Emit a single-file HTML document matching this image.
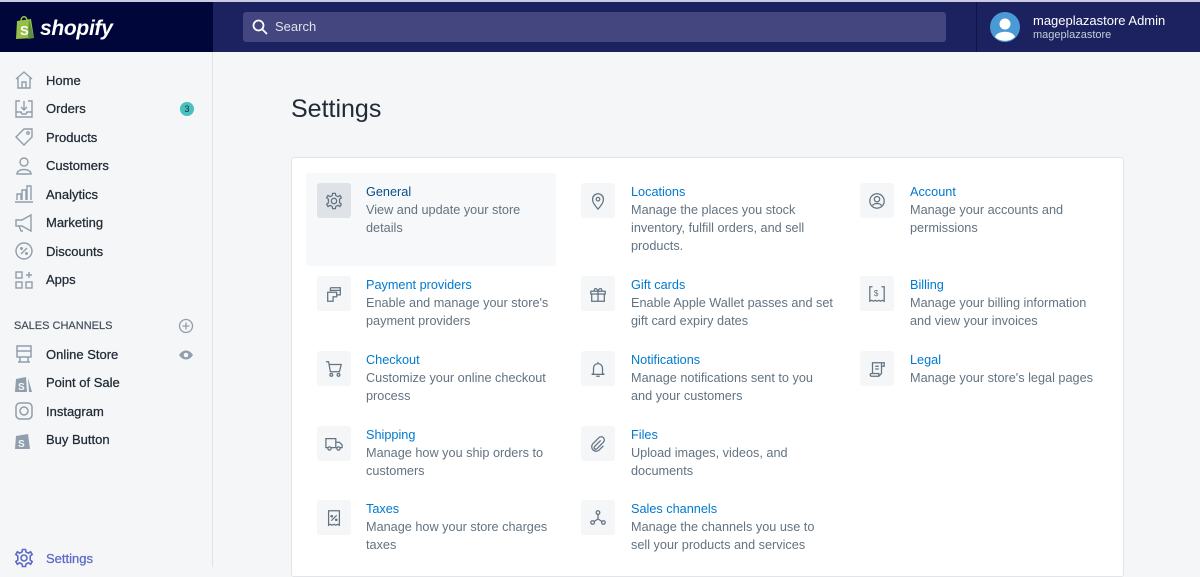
<!DOCTYPE html>
<html><head><meta charset="utf-8"><style>
*{margin:0;padding:0;box-sizing:border-box}
body{width:1200px;height:567px;overflow:hidden;background:#f4f6f8;font-family:"Liberation Sans",sans-serif;position:relative}
.top{position:absolute;left:0;top:0;width:1200px;height:52px;background:#1c2260;border-top:2px solid #c9cbe0}
.logo{position:absolute;left:0;top:0;width:213px;height:50px;background:#000639}
.logo span{position:absolute;left:40px;top:15px;color:#fff;font-weight:bold;font-style:italic;font-size:21px;letter-spacing:-0.3px}
.search{position:absolute;left:243px;top:10px;width:703px;height:30px;background:#43467f;border-radius:3px;color:#dfe3e8;font-size:13px;line-height:30px;padding-left:32px}
.div{position:absolute;left:976px;top:0;width:1px;height:50px;background:#0f1448}
.user{position:absolute;left:1033px;top:11px;color:#fff;font-size:13px}
.user small{display:block;font-size:11px;color:#c4cdd5;margin-top:1px}
.side{position:absolute;left:0;top:52px;width:213px;height:515px;background:#f4f6f8;border-right:1px solid #dfe3e8}
.nav{position:absolute;left:46px;font-size:13px;color:#212b36;font-weight:normal;-webkit-text-stroke:0.25px #212b36}
.ic{position:absolute;left:14px}
.main{position:absolute;left:214px;top:52px;width:986px;height:515px;background:#f4f6f8}
h1{position:absolute;left:291px;top:95px;font-size:25px;font-weight:normal;color:#212b36}
.card{position:absolute;left:291px;top:157px;width:833px;height:420px;background:#fff;border:1px solid #e1e4e8;border-radius:3px}
.hl{position:absolute;left:306px;top:173px;width:250px;height:93px;background:#f7f8fa;border-radius:3px}
.box{position:absolute;width:34px;height:35px;background:#f4f6f8;border-radius:3px;display:flex;align-items:center;justify-content:center}
.box.g{background:#dfe3e8}
.t{position:absolute;font-size:12.7px;line-height:18px;color:#637381}
.t b{display:block;font-weight:normal;color:#007ace}
</style></head><body>
<div class="top">
<div class="logo">
<svg style="position:absolute;left:14px;top:12px" width="22" height="26" viewBox="0 0 22 26"><path d="M3 7 L17 5 L20 24 L2 25 Z" fill="#95bf47"/><path d="M15 5 L20 24 L14 25 Z" fill="#5e8e3e"/><path d="M7 7 C7 2 12 1 13 6" stroke="#95bf47" stroke-width="1.6" fill="none"/><text x="6" y="21" fill="#fff" font-size="13" font-weight="bold" font-family="Liberation Sans">S</text></svg>
<span>shopify</span></div>
<div class="search"><svg style="position:absolute;left:9px;top:7px" width="16" height="16" viewBox="0 0 16 16"><circle cx="6.5" cy="6.5" r="5" stroke="#fff" stroke-width="1.8" fill="none"/><path d="M10 10 L15 15" stroke="#fff" stroke-width="1.8"/></svg>Search</div>
<div class="div"></div>
<svg style="position:absolute;left:990px;top:10px" width="30" height="30" viewBox="0 0 30 30"><circle cx="15" cy="15" r="15" fill="#4a9ad6"/><circle cx="15" cy="12" r="5.5" fill="#fff"/><path d="M5 25 C7 18 23 18 25 25 C20 30 10 30 5 25Z" fill="#fff"/></svg>
<div class="user">mageplazastore Admin<small>mageplazastore</small></div>
</div>
<div class="side">
<svg class="ic" style="top:18px" width="20" height="20" viewBox="0 0 20 20" fill="none" stroke="#919eab" stroke-width="1.4"><path d="M2 9 L10 2 L18 9 M4 8 V18 H16 V8 M8 18 V12 H12 V18"/></svg>
<div class="nav" style="top:21px">Home</div>
<svg class="ic" style="top:47px" width="20" height="20" viewBox="0 0 20 20" fill="none" stroke="#919eab" stroke-width="1.4"><path d="M6 2 H2 V18 H18 V2 H14 M10 2 V11 M7 8 L10 11 L13 8 M2 13 H7 L8 15 H12 L13 13 H18"/></svg>
<div class="nav" style="top:49px">Orders</div>
<div style="position:absolute;left:180px;top:50px;width:14px;height:14px;border-radius:7px;background:#47c1bf;font-size:9px;text-align:center;line-height:14px;color:#212b36">3</div>
<svg class="ic" style="top:75px" width="20" height="20" viewBox="0 0 20 20" fill="none" stroke="#919eab" stroke-width="1.4"><path d="M2 10 L10 2 H18 V10 L10 18 Z"/><circle cx="14" cy="6" r="1.2"/></svg>
<div class="nav" style="top:78px">Products</div>
<svg class="ic" style="top:104px" width="20" height="20" viewBox="0 0 20 20" fill="none" stroke="#919eab" stroke-width="1.4"><circle cx="10" cy="6" r="4"/><path d="M3 18 C3 12 17 12 17 18 Z"/></svg>
<div class="nav" style="top:106px">Customers</div>
<svg class="ic" style="top:132px" width="20" height="20" viewBox="0 0 20 20" fill="none" stroke="#919eab" stroke-width="1.4"><path d="M1 18 H19 M3 16 V10 H7 V16 M8 16 V6 H12 V16 M13 16 V2 H17 V16"/></svg>
<div class="nav" style="top:135px">Analytics</div>
<svg class="ic" style="top:161px" width="20" height="20" viewBox="0 0 20 20" fill="none" stroke="#919eab" stroke-width="1.4"><path d="M2 7 H8 L17 2 V18 L8 13 H2 Z M5 13 L7 18 H9"/></svg>
<div class="nav" style="top:163px">Marketing</div>
<svg class="ic" style="top:189px" width="20" height="20" viewBox="0 0 20 20" fill="none" stroke="#919eab" stroke-width="1.4"><circle cx="10" cy="10" r="8"/><path d="M7 13 L13 7"/><circle cx="7.5" cy="7.5" r=".8"/><circle cx="12.5" cy="12.5" r=".8"/></svg>
<div class="nav" style="top:192px">Discounts</div>
<svg class="ic" style="top:218px" width="20" height="20" viewBox="0 0 20 20" fill="none" stroke="#919eab" stroke-width="1.4"><rect x="2" y="2" width="6" height="6"/><rect x="2" y="12" width="6" height="6"/><rect x="12" y="12" width="6" height="6"/><path d="M15 2 V8 M12 5 H18"/></svg>
<div class="nav" style="top:220px">Apps</div>
<div style="position:absolute;left:14px;top:268px;font-size:11px;color:#454f5b;-webkit-text-stroke:0.2px #454f5b">SALES CHANNELS</div>
<svg style="position:absolute;left:178px;top:266px" width="16" height="16" viewBox="0 0 16 16" fill="none" stroke="#919eab" stroke-width="1.3"><circle cx="8" cy="8" r="6.5"/><path d="M8 4.5 V11.5 M4.5 8 H11.5"/></svg>
<svg class="ic" style="top:292px" width="20" height="20" viewBox="0 0 20 20" fill="none" stroke="#919eab" stroke-width="1.5"><path d="M3 2 H17 V7 H3 Z M3 7 V13 H17 V7 M6 13 V18 M14 13 V18 M4 18 H16"/></svg>
<div class="nav" style="top:295px">Online Store</div>
<svg style="position:absolute;left:178px;top:297px" width="16" height="12" viewBox="0 0 16 12"><path d="M1 6 C5 0 11 0 15 6 C11 12 5 12 1 6Z" fill="#919eab"/><circle cx="8" cy="6" r="2.3" fill="#f4f6f8"/></svg>
<svg class="ic" style="top:321px" width="20" height="20" viewBox="0 0 20 20"><path d="M2 6 L12 4 L13 19 L1 19 Z" fill="#919eab"/><path d="M14 5 L18 19 H15 Z" fill="#919eab"/><text x="4" y="17" fill="#f4f6f8" font-size="10" font-weight="bold" font-family="Liberation Sans">S</text></svg>
<div class="nav" style="top:323px">Point of Sale</div>
<svg class="ic" style="top:349px" width="20" height="20" viewBox="0 0 20 20" fill="none" stroke="#919eab" stroke-width="1.5"><rect x="2" y="2" width="16" height="16" rx="4"/><circle cx="10" cy="10" r="4"/></svg>
<div class="nav" style="top:352px">Instagram</div>
<svg class="ic" style="top:378px" width="20" height="20" viewBox="0 0 20 20"><path d="M2 6 L14 4 L16 19 L1 19 Z" fill="#919eab"/><text x="4" y="17" fill="#f4f6f8" font-size="10" font-weight="bold" font-family="Liberation Sans">S</text></svg>
<div class="nav" style="top:380px">Buy Button</div>
<svg class="ic" style="top:496px" width="20" height="20" viewBox="0 0 20 20" fill="none" stroke="#5c6ac4" stroke-width="1.6"><circle cx="10" cy="10" r="3"/><path d="M8.5 1.5 H11.5 L12 4 L14.5 5.2 L16.6 3.8 L18.2 6.4 L16.2 8 V12 L18.2 13.6 L16.6 16.2 L14.5 14.8 L12 16 L11.5 18.5 H8.5 L8 16 L5.5 14.8 L3.4 16.2 L1.8 13.6 L3.8 12 V8 L1.8 6.4 L3.4 3.8 L5.5 5.2 L8 4 Z"/></svg>
<div class="nav" style="top:499px;color:#5c6ac4;-webkit-text-stroke:0.25px #5c6ac4">Settings</div>
</div>
<div class="main"></div>
<h1>Settings</h1>
<div class="card"></div>
<div class="hl"></div>

<div class="box g" style="left:317px;top:183px"><svg width="18" height="18" viewBox="0 0 20 20" fill="none" stroke="#637381" stroke-width="1.4"><circle cx="10" cy="10" r="3"/><path d="M8.5 1.5 H11.5 L12 4 L14.5 5.2 L16.6 3.8 L18.2 6.4 L16.2 8 V12 L18.2 13.6 L16.6 16.2 L14.5 14.8 L12 16 L11.5 18.5 H8.5 L8 16 L5.5 14.8 L3.4 16.2 L1.8 13.6 L3.8 12 V8 L1.8 6.4 L3.4 3.8 L5.5 5.2 L8 4 Z"/></svg></div>
<div class="t" style="left:366px;top:183px"><b style="color:#084e8a">General</b>View and update your store<br>details</div>

<div class="box" style="left:581px;top:183px"><svg width="18" height="18" viewBox="0 0 20 20" fill="none" stroke="#637381" stroke-width="1.4"><path d="M10 19 C4 12 4 10 4 8 A6 6 0 0 1 16 8 C16 10 16 12 10 19Z"/><circle cx="10" cy="8" r="2"/></svg></div>
<div class="t" style="left:631px;top:183px"><b>Locations</b>Manage the places you stock<br>inventory, fulfill orders, and sell<br>products.</div>

<div class="box" style="left:860px;top:183px"><svg width="18" height="18" viewBox="0 0 20 20" fill="none" stroke="#637381" stroke-width="1.4"><circle cx="10" cy="10" r="8"/><circle cx="10" cy="8" r="3"/><path d="M5 15 C7 12 13 12 15 15"/></svg></div>
<div class="t" style="left:910px;top:183px"><b>Account</b>Manage your accounts and<br>permissions</div>

<div class="box" style="left:317px;top:276px"><svg width="18" height="18" viewBox="0 0 20 20" fill="none" stroke="#637381" stroke-width="1.4"><path d="M6 3 H17 V11 H13 M6 3 V7 M6 6 H17 M3 8 H13 V13 L9 13 V18 H3 Z"/></svg></div>
<div class="t" style="left:366px;top:276px"><b>Payment providers</b>Enable and manage your store's<br>payment providers</div>

<div class="box" style="left:581px;top:276px"><svg width="18" height="18" viewBox="0 0 20 20" fill="none" stroke="#637381" stroke-width="1.4"><path d="M2 7 H18 V10 H2 Z M3 10 V18 H17 V10 M10 7 V18 M10 7 C8 2 5 4 6 7 M10 7 C12 2 15 4 14 7"/></svg></div>
<div class="t" style="left:631px;top:276px"><b>Gift cards</b>Enable Apple Wallet passes and set<br>gift card expiry dates</div>

<div class="box" style="left:860px;top:276px"><svg width="18" height="18" viewBox="0 0 20 20" fill="none" stroke="#637381" stroke-width="1.4"><path d="M5 2 H2 V18 L4 17 L6 18 L8 17 L10 18 L12 17 L14 18 L16 17 L18 18 V2 H15"/><text x="6.5" y="12" font-size="9" fill="#637381" stroke="none" font-family="Liberation Sans">$</text></svg></div>
<div class="t" style="left:910px;top:276px"><b>Billing</b>Manage your billing information<br>and view your invoices</div>

<div class="box" style="left:317px;top:351px"><svg width="18" height="18" viewBox="0 0 20 20" fill="none" stroke="#637381" stroke-width="1.4"><path d="M1 2 H4 L6 13 H16 L18 5 H5"/><circle cx="7" cy="16.5" r="1.5"/><circle cx="15" cy="16.5" r="1.5"/></svg></div>
<div class="t" style="left:366px;top:351px"><b>Checkout</b>Customize your online checkout<br>process</div>

<div class="box" style="left:581px;top:351px"><svg width="18" height="18" viewBox="0 0 20 20" fill="none" stroke="#637381" stroke-width="1.4"><path d="M10 2 V3 M5 15 V9 A5 5 0 0 1 15 9 V15 L17 16 H3 L5 15 M8 18 H12"/></svg></div>
<div class="t" style="left:631px;top:351px"><b>Notifications</b>Manage notifications sent to you<br>and your customers</div>

<div class="box" style="left:860px;top:351px"><svg width="18" height="18" viewBox="0 0 20 20" fill="none" stroke="#637381" stroke-width="1.4"><path d="M5 15 V3 H15 V15 L12 18 H4 C2 18 2 15 4 15 H12 V18 M15 3 H18 V7 H15 M8 7 H12 M8 10 H12"/></svg></div>
<div class="t" style="left:910px;top:351px"><b>Legal</b>Manage your store's legal pages</div>

<div class="box" style="left:317px;top:426px"><svg width="18" height="18" viewBox="0 0 20 20" fill="none" stroke="#637381" stroke-width="1.4"><path d="M1 4 H12 V14 H1 Z M12 8 H16 L19 11 V14 H12"/><circle cx="5" cy="15" r="1.8" fill="#f4f6f8"/><circle cx="15" cy="15" r="1.8" fill="#f4f6f8"/></svg></div>
<div class="t" style="left:366px;top:426px"><b>Shipping</b>Manage how you ship orders to<br>customers</div>

<div class="box" style="left:581px;top:426px"><svg width="18" height="18" viewBox="0 0 20 20" fill="none" stroke="#637381" stroke-width="1.4"><path d="M13 6 L6 13 A1.8 1.8 0 0 0 9 15 L16 8 A3.5 3.5 0 0 0 11 3 L4 10 A5 5 0 0 0 11 17 L16 12"/></svg></div>
<div class="t" style="left:631px;top:426px"><b>Files</b>Upload images, videos, and<br>documents</div>

<div class="box" style="left:317px;top:500px"><svg width="18" height="18" viewBox="0 0 20 20" fill="none" stroke="#637381" stroke-width="1.4"><path d="M4 2 H16 V18 L14 17 L12 18 L10 17 L8 18 L6 17 L4 18 Z M7 13 L13 7"/><circle cx="7.5" cy="8" r=".8"/><circle cx="12.5" cy="12" r=".8"/></svg></div>
<div class="t" style="left:366px;top:500px"><b>Taxes</b>Manage how your store charges<br>taxes</div>

<div class="box" style="left:581px;top:500px"><svg width="18" height="18" viewBox="0 0 20 20" fill="none" stroke="#637381" stroke-width="1.4"><circle cx="10" cy="4" r="2"/><circle cx="4" cy="15" r="2"/><circle cx="16" cy="15" r="2"/><path d="M10 6 V11 L5.5 14 M10 11 L14.5 14"/></svg></div>
<div class="t" style="left:631px;top:500px"><b>Sales channels</b>Manage the channels you use to<br>sell your products and services</div>
</body></html>
